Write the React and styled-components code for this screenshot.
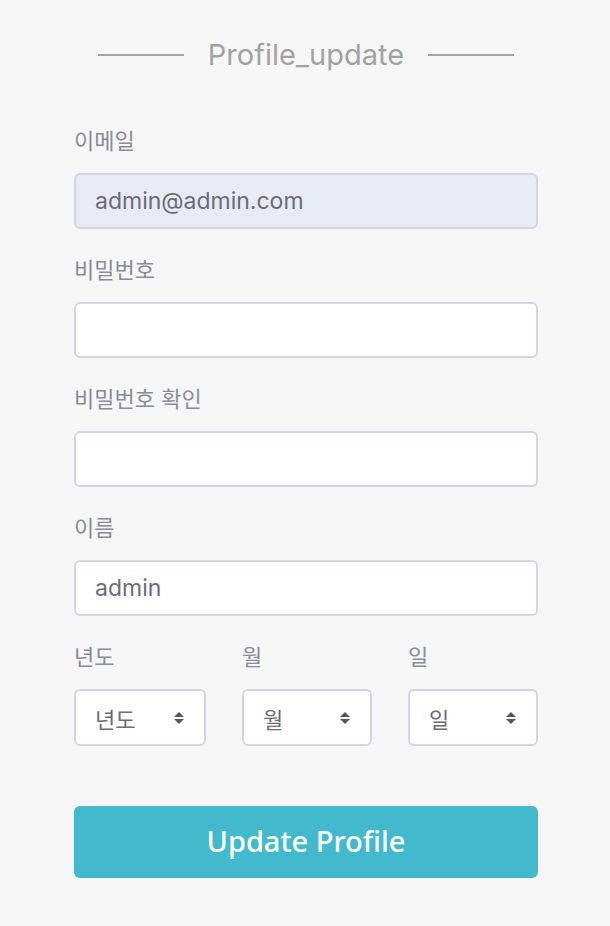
import React from "react";
import styled, { createGlobalStyle } from "styled-components";

const GlobalStyle = createGlobalStyle`
  * {
    box-sizing: border-box;
  }
  body {
    margin: 0;
    background: #f6f6f6;
    font-family: Inter, "Noto Sans CJK KR", sans-serif;
  }
`;

const fields = [
  { label: "이메일", value: "admin@admin.com", disabled: true },
  { label: "비밀번호", value: "", type: "password" },
  { label: "비밀번호 확인", value: "", type: "password" },
  { label: "이름", value: "admin" },
];

const dates = ["년도", "월", "일"];

const SelectArrow = () => (
  <svg width="12" height="14" viewBox="0 0 12 14">
    <path d="M6 1 L11 6 H1 Z" fill="#555563" />
    <path d="M6 13 L11 8 H1 Z" fill="#555563" />
  </svg>
);

const App = () => {
  return (
    <Page>
      <GlobalStyle />
      <TitleRow>
        <Line />
        <Title>Profile_update</Title>
        <Line />
      </TitleRow>

      <StyledForm onSubmit={(e) => e.preventDefault()}>
        {fields.map((f) => (
          <Group key={f.label}>
            <Label>{f.label}</Label>
            <Input
              type={f.type || "text"}
              defaultValue={f.value}
              readOnly={f.disabled}
              $disabled={f.disabled}
            />
          </Group>
        ))}

        <DateRow>
          {dates.map((d) => (
            <DateCol key={d}>
              <Label>{d}</Label>
              <SelectBox>
                <span>{d}</span>
                <SelectArrow />
              </SelectBox>
            </DateCol>
          ))}
        </DateRow>

        <Submit type="submit">Update Profile</Submit>
      </StyledForm>
    </Page>
  );
};

export default App;

const Page = styled.div`
  width: 100%;
  min-height: 926px;
  padding: 39px 72px 40px 74px;
`;

const TitleRow = styled.div`
  display: flex;
  align-items: center;
  justify-content: center;
  gap: 24px;
`;

const Line = styled.div`
  width: 86px;
  height: 2px;
  background: #a4a4a4;
`;

const Title = styled.h2`
  margin: 0;
  font-size: 29px;
  line-height: 32px;
  font-weight: 400;
  color: #a2a2a2;
`;

const StyledForm = styled.form`
  display: flex;
  flex-direction: column;
  margin-top: 58px;
`;

const Group = styled.div`
  display: flex;
  flex-direction: column;
  margin-bottom: 29px;
`;

const Label = styled.label`
  font-size: 22px;
  line-height: 24px;
  color: #8a8a9c;
  margin-bottom: 20px;
`;

const Input = styled.input`
  height: 56px;
  width: 100%;
  border: 2px solid #d4d4e4;
  border-radius: 6px;
  padding: 0 19px;
  font-family: Inter, "Noto Sans CJK KR", sans-serif;
  font-size: 23px;
  color: #6b6b78;
  background: ${(p) => (p.$disabled ? "#e8ebf4" : "#ffffff")};
  outline: none;
`;

const DateRow = styled.div`
  display: grid;
  grid-template-columns: 132px 130px 130px;
  justify-content: space-between;
`;

const DateCol = styled.div`
  display: flex;
  flex-direction: column;
`;

const SelectBox = styled.div`
  height: 57px;
  border: 2px solid #d4d4e4;
  border-radius: 6px;
  background: #fff;
  display: flex;
  align-items: center;
  justify-content: space-between;
  padding: 0 19px 0 19px;
  font-size: 22px;
  color: #6b6b78;
`;

const Submit = styled.button`
  margin-top: 60px;
  height: 72px;
  width: 100%;
  border: none;
  border-radius: 6px;
  background: #42b9cc;
  color: #fff;
  font-family: "Noto Sans", sans-serif;
  font-size: 29px;
  font-weight: 500;
  padding-bottom: 4px;
  cursor: pointer;
`;
